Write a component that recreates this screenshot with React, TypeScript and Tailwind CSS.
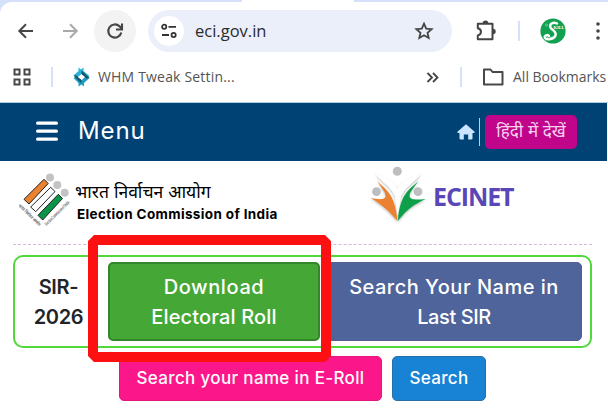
function BackForward() {
  return (
    <svg width="62" height="20" viewBox="0 0 62 20" fill="none" strokeWidth="2" className="ml-[17px] shrink-0">
      <path d="M16 10H2.5M9 3.3 2.3 10 9 16.7" stroke="#474747" />
      <path d="M46 10h13.500M53 3.300 59.700 10 53 16.700" stroke="#a9a9a9" />
    </svg>
  );
}

function ReloadIcon() {
  return (
    <svg width="18" height="18" viewBox="0 0 18 18" fill="none" stroke="#454545" strokeWidth="2.100">
      <path d="M15.300 10.500A6.600 6.600 0 1 1 13.500 4.300L15.600 6.500" />
      <path d="M16 1.500v6h-6" />
    </svg>
  );
}

function TuneIcon() {
  return (
    <svg width="18" height="16" viewBox="0 0 18 16" fill="none" stroke="#333" strokeWidth="1.800">
      <circle cx="4.200" cy="3.800" r="2.100" />
      <path d="M8.500 3.800H16M2 12h7" />
      <circle cx="13.600" cy="12" r="2.100" />
    </svg>
  );
}

function StarIcon() {
  return (
    <svg width="20" height="20" viewBox="0 0 20 20" fill="none" stroke="#444" strokeWidth="1.800">
      <path d="M10 2.700 12.200 7.600 17.600 8.100 13.500 11.700 14.700 17 10 14.200 5.300 17 6.500 11.700 2.400 8.100 7.800 7.600Z" />
    </svg>
  );
}

function ExtensionIcon() {
  return (
    <svg width="22" height="22" viewBox="0 0 22 22" className="absolute left-[475px] top-[18px]">
      <path d="M2.800 3.800H17.500V19.300H2.800V15.400C7 14.600 7 9 2.800 8.200Z" fill="none" stroke="#444" strokeWidth="2" strokeLinejoin="round" />
      <path d="M7.700 3.300a2.800 2.800 0 0 1 5.600 0ZM18 8.800a2.700 2.700 0 0 1 0 5.400Z" fill="#444" />
    </svg>
  );
}

function SkillLogo() {
  return (
    <svg width="26" height="26" viewBox="0 0 26 26" className="shrink-0">
      <circle cx="13" cy="13" r="12.600" fill="#12a150" />
      <path d="M17 5.500C13 3.500 9 6 10.500 9.500C12 12.500 17 13 15.500 17.500C14 21.500 7 22.500 5 20C3.500 17.500 8 16 9 18" fill="none" stroke="#fff" strokeWidth="2.400" strokeLinecap="round" />
      <text x="13.500" y="10.500" fontSize="5" fontWeight="700" fill="#fff" textLength="11" lengthAdjust="spacingAndGlyphs" className="font-['Liberation_Serif',serif]">KILL</text>
      <text x="7" y="20.500" fontSize="4" fontWeight="700" fill="#fff" className="font-['Liberation_Serif',serif]">Gui</text>
      <circle cx="6.500" cy="7" r="1" fill="none" stroke="#b8e8cb" strokeWidth=".5" />
    </svg>
  );
}

function WhmIcon() {
  return (
    <svg width="17" height="20" viewBox="0 0 17 20" className="shrink-0">
      <path d="M5.500 0.500 8 2.500 10.500 0.500V4L16.500 9 13.500 11.500 8.500 7 4.500 10.500 0.500 8.500 5.500 4Z" fill="#27b4d8" />
      <path d="M13 8.500 16.500 11 11 16V19.500L8.500 17.500 5.500 19.500V16L0.500 11 3.500 9 8.500 13.500Z" fill="#1d9fc5" />
      <path d="M0.500 8.500 3.500 8.500 8.500 13 8.500 16.500ZM16.500 11 13.500 11.500 8.500 7 8.500 3.500Z" fill="#195269" />
      <path d="M8.500 7.500 12 10 8.500 12.500 5 10Z" fill="#fff" />
    </svg>
  );
}

function EciLogo() {
  return (
    <svg width="54" height="56" viewBox="0 0 54 56" className="absolute left-[18px] top-[12px] overflow-visible">
      <g fill="#c3c3c3">
        <circle cx="32" cy="4.500" r="4" />
        <circle cx="39.300" cy="12" r="4" />
        <circle cx="46.700" cy="19.700" r="4" />
      </g>
      <g stroke="#222" strokeWidth="1">
        <path d="M26 6.300 30.200 10.500 11 31 6 26.300Z" fill="#ea8230" />
        <path d="M32.700 14.300 37 18.500 17.700 38.700 12.700 34Z" fill="#fff" />
        <path d="M40.300 21.300 44.500 25.500 24.700 47 20 42.300Z" fill="#099447" />
      </g>
      <g fill="#666" fontSize="4.500" fontWeight="700" className="font-['Noto_Sans',sans-serif]">
        <text transform="translate(0 33) rotate(44)" textLength="29" lengthAdjust="spacingAndGlyphs">भारत निर्वाचन आयोग</text>
        <text transform="translate(28.500 53) rotate(-45)" textLength="33" lengthAdjust="spacingAndGlyphs">Election Commission of India</text>
      </g>
    </svg>
  );
}

function EcinetLogo() {
  return (
    <svg width="60" height="64" viewBox="0 0 60 64" className="absolute left-[368px] top-[4px]">
      <defs>
        <filter id="soft" x="-20%" y="-20%" width="140%" height="150%">
          <feDropShadow dx="0" dy="1.200" stdDeviation="1.200" floodOpacity=".3" />
        </filter>
      </defs>
      <g filter="url(#soft)">
        <path d="M7 8C13 13 23 13 29.500 24C36 13 46 13 53 8C48 17 38 20 33 31L29.600 50 27 31C22 20 13 17 7 8Z" fill="#fff" />
        <path d="M9.300 15.700C14 23 27 25 29.500 56C23 49 18 42 2.700 33C10 34.500 16 35 17.500 32C18.500 27 12 22 9.300 15.700Z" fill="#ea8230" />
        <path d="M50.300 15.700C45 23 32 25 29.900 56C36 49 40 42 57.700 34C48 35 42 35 41.500 31C41.500 26 47 22 50.300 15.700Z" fill="#0aa04a" />
      </g>
      <g fill="#bcbec0">
        <circle cx="29.300" cy="6.300" r="4.500" />
        <circle cx="8.500" cy="26.700" r="4.400" />
        <circle cx="50" cy="26.700" r="4.400" />
      </g>
    </svg>
  );
}

function HomeIcon() {
  return (
    <svg width="18" height="16" viewBox="0 0 18 16" fill="#c9e5ff">
      <path d="M9 0.300 17.600 7.800Q18 9 16.700 9H15.500V14.500Q15.500 15.600 14.400 15.600H11.200V10.600H6.800V15.600H3.600Q2.500 15.600 2.500 14.500V9H1.300Q0 9 0.400 7.800Z" />
    </svg>
  );
}

function BrowserBar() {
  return (
    <div className="relative h-[103px] overflow-hidden bg-[#d5e1fb] font-['Open_Sans',sans-serif]">
      <div className="absolute left-[242px] top-0 h-2 w-[112px] bg-white" />
      <div className="mt-[2px] h-[101px] rounded-tl-[12px] border-b border-[#a9d0de] bg-white">
        <div className="relative flex h-[58px] items-center">
          <BackForward />
          <div className="ml-[15px] flex size-[42px] shrink-0 items-center justify-center rounded-full bg-[#f3f3f4]">
            <ReloadIcon />
          </div>
          <div className="ml-3 flex h-[42px] w-[304px] shrink-0 items-center rounded-full bg-[#eaeffa] pl-[6px] pr-[18px]">
            <div className="flex size-[30px] items-center justify-center rounded-full bg-white">
              <TuneIcon />
            </div>
            <span className="ml-[11px] flex-1 text-[16.500px] text-[#2b2b2b]">eci.gov.in</span>
            <StarIcon />
          </div>
          <ExtensionIcon />
          <div className="ml-[66px] h-5 w-[2px] bg-[#d5e1fb]" />
          <div className="ml-5">
            <SkillLogo />
          </div>
          <svg width="6" height="20" viewBox="0 0 6 20" fill="#444" className="ml-[29px] shrink-0">
            <circle cx="3" cy="3" r="1.800" />
            <circle cx="3" cy="10" r="1.800" />
            <circle cx="3" cy="17" r="1.800" />
          </svg>
        </div>

        {/* Bookmarks */}
        <div className="flex h-[34px] items-center text-[14px] whitespace-nowrap text-[#555]">
          <svg width="18" height="18" viewBox="0 0 18 18" fill="none" stroke="#484848" strokeWidth="2" className="ml-[13px]">
            <path d="M1.500 1.500h5v5h-5zM11.500 1.500h5v5h-5zM1.500 11.500h5v5h-5zM11.500 11.500h5v5h-5z" />
          </svg>
          <div className="ml-5 mr-5 h-5 w-[2px] bg-[#d5e1fb]" />
          <WhmIcon />
          <span className="ml-2 w-[328px] pb-px tracking-[0.180px]">WHM Tweak Settin...</span>
          <svg width="13" height="11" viewBox="0 0 13 11" fill="none" stroke="#444" strokeWidth="1.800">
            <path d="M1.500 1 6 5.500 1.500 10M7 1l4.500 4.500L7 10" />
          </svg>
          <div className="ml-[21px] h-5 w-[2px] bg-[#d5e1fb]" />
          <svg width="22" height="18" viewBox="0 0 22 18" fill="none" stroke="#484848" strokeWidth="2" strokeLinejoin="round" className="ml-[20px] shrink-0">
            <path d="M2 1.500H8.500L10.500 4H20.500V16.500H2Z" />
          </svg>
          <span className="ml-[9px] pb-px">All Bookmarks</span>
        </div>
      </div>
    </div>
  );
}

export default function App() {
  return (
    <div className="h-[417px] w-[608px] overflow-hidden bg-white font-['Inter','Noto_Sans',sans-serif]">
      <BrowserBar />

      {/* Site header */}
      <header className="mr-px flex h-[58px] items-center bg-[#004274] pl-9 text-white">
        <svg width="22" height="20" viewBox="0 0 22 20" stroke="#fff" strokeWidth="3.200" strokeLinecap="round" className="-mt-[3px]">
          <path d="M1.600 2.200H20.400M1.600 10.200H20.400M1.600 18.200H20.400" />
        </svg>
        <span className="ml-5 w-[379px] pb-0.5 text-[24px] tracking-[0.900px]">Menu</span>
        <HomeIcon />
        <div className="ml-[4px] mb-px h-7 w-px bg-[#b9d3e6]" />
        <button className="ml-[5px] h-[34px] w-[92px] rounded-[5px] bg-[#c0058b] text-[17px] whitespace-nowrap text-[#f5d3ee]">हिंदी में देखें</button>
      </header>

      {/* Logos */}
      <div className="relative ml-[13px] mr-4 h-[84px]">
        <div className="absolute -left-[13px] top-0 h-full w-[600px]">
          <EciLogo />
          <EcinetLogo />
        </div>
        <div className="flex h-full items-start border-b border-dashed border-[#dfb3dc]">
          <div className="ml-[63px] w-[357px] whitespace-nowrap pt-[19px] text-black">
            <p className="-ml-px text-[17.500px] leading-6">भारत निर्वाचन आयोग</p>
            <p className="ml-px text-[13.500px] font-bold leading-5 tracking-[0.360px]">Election Commission of India</p>
          </div>
          <span className="pt-[19px] font-['Open_Sans',sans-serif] text-[25px] font-bold leading-8 tracking-[-1.100px] text-[#5947b8]">ECINET</span>
        </div>
      </div>

      <div className="relative ml-[13px] mt-[10px] flex h-[93px] w-[579px] items-center rounded-[10px] border-2 border-[#50d83b] text-center text-[20px] font-medium leading-[30px] text-white">
        <p className="w-[88px] pr-px font-semibold tracking-[-0.300px] text-[#212529]">SIR-<br />2026</p>
        <button className="ml-[5px] h-[79px] w-[212px] rounded-[5px] border-2 border-[#32872b] bg-[#45a836]">
          <span className="block tracking-[0.600px]">Download</span>
          <span className="block tracking-[0.150px]">Electoral Roll</span>
        </button>
        <button className="ml-[6px] h-[79px] w-[256px] rounded-[5px] border border-[#545f90] bg-[#4e649b]">
          <span className="block tracking-[0.500px]">Search Your Name in</span>
          <span className="block tracking-[-0.400px]">Last SIR</span>
        </button>
        {/* Highlight frame */}
        <svg width="243" height="127" viewBox="0 0 243 127" className="absolute left-[73px] -top-[22px] z-10">
          <path d="M6 0H237L243 6V121L237 127H6L0 121V6ZM10 10V117H233V10Z" fill="#fc1012" fillRule="evenodd" />
        </svg>
      </div>

      <div className="mt-2 ml-[119px] flex gap-[10px] text-[17px] font-medium tracking-[0.350px] whitespace-nowrap text-white">
        <button className="h-[45px] w-[263px] rounded-[5px] border border-[#e3187d] bg-[#fb168a]">Search your name in E-Roll</button>
        <button className="h-[45px] w-[94px] rounded-[5px] border border-[#2870a4] bg-[#1883d5]">Search</button>
      </div>
    </div>
  );
}
